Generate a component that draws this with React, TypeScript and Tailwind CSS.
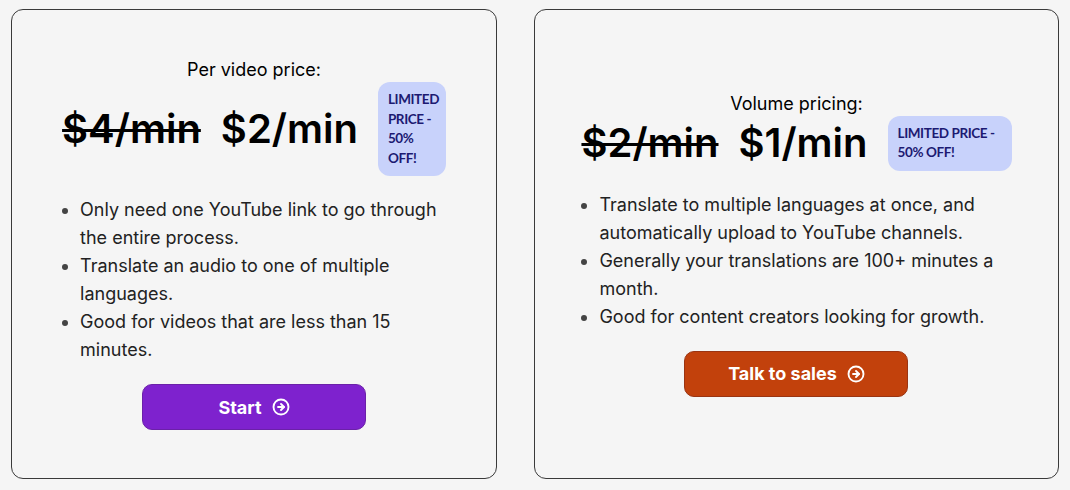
import React from 'react';
import { CircleArrowRight } from 'lucide-react';

interface PlanProps {
  width: string;
  title: string;
  oldPrice: string;
  newPrice: string;
  badgeWidth: string;
  bullets: string[];
  cta: string;
  buttonClass: string;
}

const Plan: React.FC<PlanProps> = ({ width, title, oldPrice, newPrice, badgeWidth, bullets, cta, buttonClass }) => {
  return (
    <div className={`${width} shrink-0 flex flex-col items-center justify-center rounded-[12px] border border-[#3a3a3a] bg-[#f5f5f5]`}>
      <div className="flex w-fit flex-col">
        <h3 className="text-center text-[18px] leading-6 text-black">{title}</h3>
        <div className="flex items-center gap-5">
          <span className="whitespace-nowrap text-[40px] leading-none font-semibold text-black line-through decoration-[2.5px]">
            {oldPrice}
          </span>
          <span className="whitespace-nowrap text-[40px] leading-none font-semibold text-black">
            {newPrice}
          </span>
          <div
            className={`${badgeWidth} shrink-0 rounded-[12px] bg-[#c8d2fb] px-[10px] py-2 font-['Lato',sans-serif] text-[13.5px] leading-[19.5px] font-bold tracking-[-0.03em] text-[#1c1a72]`}
          >
            LIMITED PRICE - 50% OFF!
          </div>
        </div>
        <ul className="mt-5 w-0 min-w-full list-disc pl-[18px] text-[18px] leading-7 text-[#222] marker:text-[#444]">
          {bullets.map((b, i) => (
            <li key={i}>{b}</li>
          ))}
        </ul>
        <div className="mt-5 flex justify-center">
          <button
            className={`flex h-[46px] w-56 items-center justify-center gap-[10px] rounded-[10px] border text-[18px] font-bold text-white ${buttonClass}`}
          >
            {cta}
            <CircleArrowRight size={18} strokeWidth={2.5} />
          </button>
        </div>
      </div>
    </div>
  );
};

export default function App() {
  return (
    <div className="flex h-[490px] w-[1070px] gap-[37px] bg-[#f5f5f5] px-[11px] pt-[9px] pb-[11px] font-['Inter',sans-serif]">
      <Plan
        width="w-[486px]"
        title="Per video price:"
        oldPrice="$4/min"
        newPrice="$2/min"
        badgeWidth="w-[68px]"
        bullets={[
          'Only need one YouTube link to go through the entire process.',
          'Translate an audio to one of multiple languages.',
          'Good for videos that are less than 15 minutes.',
        ]}
        cta="Start"
        buttonClass="bg-[#7e22ce] border-[#6b21a8]"
      />
      <Plan
        width="w-[525px]"
        title="Volume pricing:"
        oldPrice="$2/min"
        newPrice="$1/min"
        badgeWidth="w-[124px]"
        bullets={[
          'Translate to multiple languages at once, and automatically upload to YouTube channels.',
          'Generally your translations are 100+ minutes a month.',
          'Good for content creators looking for growth.',
        ]}
        cta="Talk to sales"
        buttonClass="bg-[#c2410c] border-[#9a3412]"
      />
    </div>
  );
}
